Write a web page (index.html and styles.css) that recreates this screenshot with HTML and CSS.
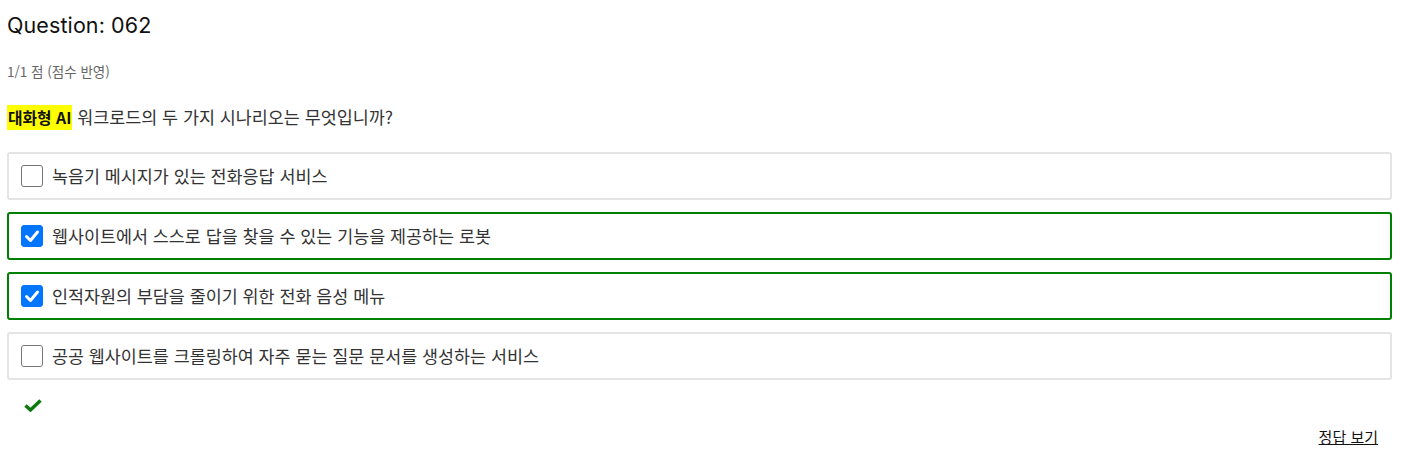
FILE: index.html
```html
<!DOCTYPE html>
<html lang="ko">
<head>
<meta charset="utf-8">
<link rel="stylesheet" href="styles.css">
</head>
<body>
<div class="page">
  <h2 class="title">Question: 062</h2>
  <div class="score">1/1 점 (점수 반영)</div>
  <p class="question"><mark class="hl">대화형 AI</mark> 워크로드의 두 가지 시나리오는 무엇입니까?</p>
  <div class="options">
    <label class="option">
      <span class="box"></span>
      <span class="text">녹음기 메시지가 있는 전화응답 서비스</span>
    </label>
    <label class="option correct">
      <span class="box checked"><svg viewBox="0 0 22 22" width="22" height="22"><path d="M5.5 11.5 L9.5 15.5 L16.5 7" fill="none" stroke="#fff" stroke-width="3" stroke-linecap="round" stroke-linejoin="round"/></svg></span>
      <span class="text">웹사이트에서 스스로 답을 찾을 수 있는 기능을 제공하는 로봇</span>
    </label>
    <label class="option correct">
      <span class="box checked"><svg viewBox="0 0 22 22" width="22" height="22"><path d="M5.5 11.5 L9.5 15.5 L16.5 7" fill="none" stroke="#fff" stroke-width="3" stroke-linecap="round" stroke-linejoin="round"/></svg></span>
      <span class="text">인적자원의 부담을 줄이기 위한 전화 음성 메뉴</span>
    </label>
    <label class="option">
      <span class="box"></span>
      <span class="text">공공 웹사이트를 크롤링하여 자주 묻는 질문 문서를 생성하는 서비스</span>
    </label>
  </div>
  <div class="result">
    <svg viewBox="0 0 18 14" width="18" height="14"><path d="M1.5 7.5 L6.5 12 L16.5 2.5" fill="none" stroke="#0a7a0a" stroke-width="3.4" stroke-linejoin="miter"/></svg>
  </div>
  <div class="footer">
    <a class="answer" href="#">정답 보기</a>
  </div>
</div>
</body>
</html>
```

FILE: styles.css
```css
html, body {
  margin: 0;
  padding: 0;
  background: #fff;
}
.page {
  padding: 12px 12px 0 7px;
  font-family: "Noto Sans CJK KR", "Noto Sans", sans-serif;
  color: #333;
}
.title {
  margin: 0;
  font-family: "Inter", "Noto Sans", sans-serif;
  font-weight: 400;
  font-size: 21.5px;
  line-height: 26px;
  color: #111;
  letter-spacing: 0.1px;
}
.score {
  margin-top: 24px;
  font-size: 13.5px;
  line-height: 18px;
  color: #666;
}
.question {
  margin: 25px 0 0;
  font-size: 17.4px;
  line-height: 24px;
  height: 24px;
  color: #333;
}
.hl {
  background: #ffff00;
  color: #111;
  font-weight: 700;
  font-size: 15.8px;
  padding: 1px 1px;
}
.options {
  margin-top: 23px;
  display: flex;
  flex-direction: column;
  gap: 12px;
}
.option {
  display: flex;
  align-items: center;
  gap: 9px;
  height: 48px;
  box-sizing: border-box;
  padding: 0 12px;
  border: 2px solid #e4e4e4;
  border-radius: 3px;
}
.option.correct {
  border-color: #008000;
}
.box {
  width: 22px;
  height: 22px;
  box-sizing: border-box;
  border: 1px solid #767676;
  border-radius: 3px;
  background: #fff;
  flex: none;
  display: flex;
}
.box.checked {
  background: #0075ff;
  border-color: #0075ff;
}
.box svg {
  margin: -1px;
}
.text {
  font-size: 17.4px;
  line-height: 24px;
  color: #333;
}
.result {
  margin-top: 18px;
  padding-left: 17px;
  height: 14px;
  display: flex;
}
.footer {
  display: flex;
  justify-content: flex-end;
  padding-right: 14px;
  margin-top: 15px;
}
.answer {
  font-size: 15px;
  line-height: 20px;
  color: #111;
  text-decoration: underline;
}
```
